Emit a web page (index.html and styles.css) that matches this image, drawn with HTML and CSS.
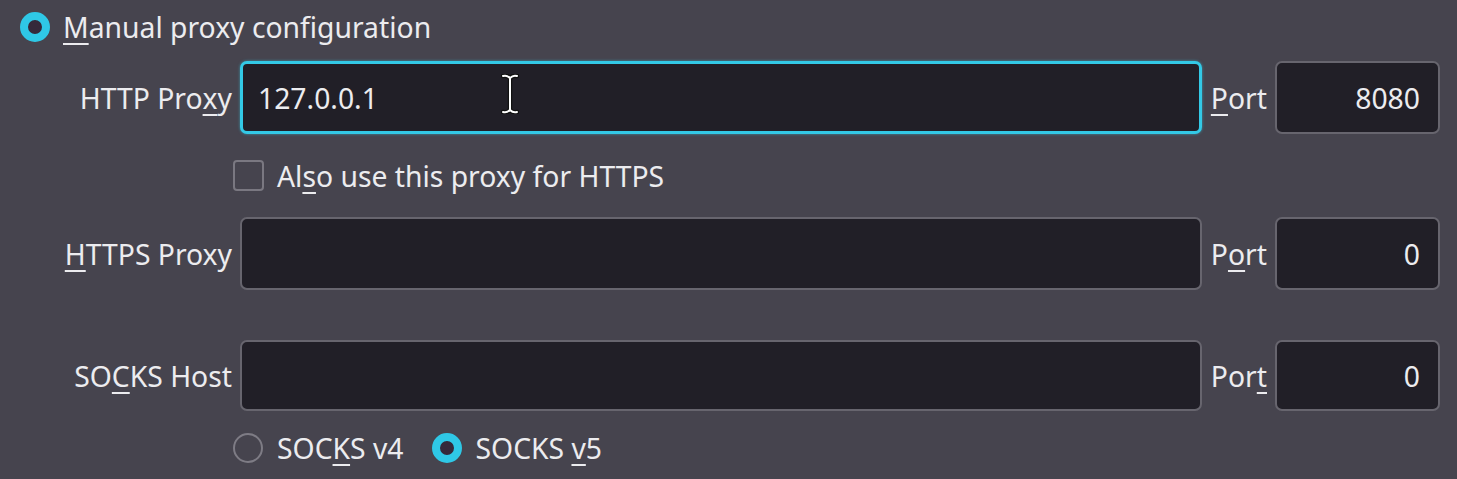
FILE: index.html
```html
<!DOCTYPE html>
<html lang="en">
<head>
    <meta charset="UTF-8">
    <title>Proxy settings</title>
    <link rel="stylesheet" href="styles.css">
</head>
<body>
    <div class="option-row">
        <span class="radio checked"></span>
        <span class="option-text"><u>M</u>anual proxy configuration</span>
    </div>

    <div class="proxy-grid">
        <label class="field-label">HTTP Pro<u>x</u>y</label>
        <div class="field focused">
            <span class="field-value">127.0.0.1</span>
            <svg class="ibeam" width="18" height="40" viewBox="0 0 18 40">
                <path d="M2 2 C5 1 7 2 9 4 C11 2 13 1 16 2 M9 4 V36 M2 38 C5 39 7 38 9 36 C11 38 13 39 16 38" fill="none" stroke="#111" stroke-width="4.5" stroke-linecap="round"/>
                <path d="M2 2 C5 1 7 2 9 4 C11 2 13 1 16 2 M9 4 V36 M2 38 C5 39 7 38 9 36 C11 38 13 39 16 38" fill="none" stroke="#fff" stroke-width="2" stroke-linecap="round"/>
            </svg>
        </div>
        <label class="port-label"><u>P</u>ort</label>
        <div class="field port"><span class="field-value">8080</span></div>

        <div class="check-row">
            <span class="checkbox"></span>
            <span class="option-text">Al<u>s</u>o use this proxy for HTTPS</span>
        </div>

        <label class="field-label"><u>H</u>TTPS Proxy</label>
        <div class="field"></div>
        <label class="port-label">P<u>o</u>rt</label>
        <div class="field port"><span class="field-value">0</span></div>

        <div class="spacer"></div>

        <label class="field-label">SO<u>C</u>KS Host</label>
        <div class="field socks"></div>
        <label class="port-label">Por<u>t</u></label>
        <div class="field port socks"><span class="field-value">0</span></div>

        <div class="version-row">
            <span class="radio"></span>
            <span class="option-text">SOC<u>K</u>S v4</span>
            <span class="radio checked"></span>
            <span class="option-text">SOCKS <u>v</u>5</span>
        </div>
    </div>
</body>
</html>
```

FILE: styles.css
```css
body {
    margin: 0;
    background: #46444e;
    color: #ececef;
    font-family: 'Noto Sans', 'Open Sans', sans-serif;
    font-size: 28.3px;
    height: 479px;
    overflow: hidden;
}

u {
    text-decoration-thickness: 2px;
    text-underline-offset: 5px;
}

.option-row {
    display: flex;
    align-items: center;
    gap: 13px;
    height: 54px;
    padding-left: 20px;
}

.radio {
    width: 30px;
    height: 30px;
    box-sizing: border-box;
    border-radius: 50%;
    border: 2px solid #7e7c85;
    background: #46444e;
    flex-shrink: 0;
}

.radio.checked {
    border: 8px solid #2fc8e6;
    background: #35293a;
}

.proxy-grid {
    display: grid;
    grid-template-columns: 232px 1fr auto 165px;
    column-gap: 8px;
    margin-top: 7px;
    padding-right: 17px;
}

.field-label,
.port-label {
    display: flex;
    align-items: center;
    white-space: nowrap;
}

.field-label {
    justify-content: flex-end;
}

.port-label {
    padding-left: 1px;
}

.field {
    position: relative;
    height: 73px;
    box-sizing: border-box;
    background: #211f27;
    border: 2px solid #67656e;
    border-radius: 7px;
    display: flex;
    align-items: center;
    padding: 0 17px;
}

.field.focused {
    border: 3px solid #33c9e6;
    box-shadow: 0 0 3px rgba(51, 201, 230, 0.6);
    padding-left: 15px;
}

.field.port {
    justify-content: flex-end;
    padding-right: 18px;
}

.field.socks {
    height: 71px;
}

.ibeam {
    position: absolute;
    left: 258px;
    top: 10px;
}

.check-row {
    grid-column: 2 / 5;
    display: flex;
    align-items: center;
    gap: 13px;
    height: 83px;
    margin-left: -7px;
}

.checkbox {
    width: 31px;
    height: 31px;
    box-sizing: border-box;
    border: 2px solid #7a7881;
    border-radius: 4px;
}

.spacer {
    grid-column: 1 / 5;
    height: 50px;
}

.version-row {
    grid-column: 2 / 5;
    display: flex;
    align-items: center;
    gap: 14px;
    height: 74px;
    margin-left: -7px;
}

.version-row .option-text {
    margin-right: 14px;
}
```
